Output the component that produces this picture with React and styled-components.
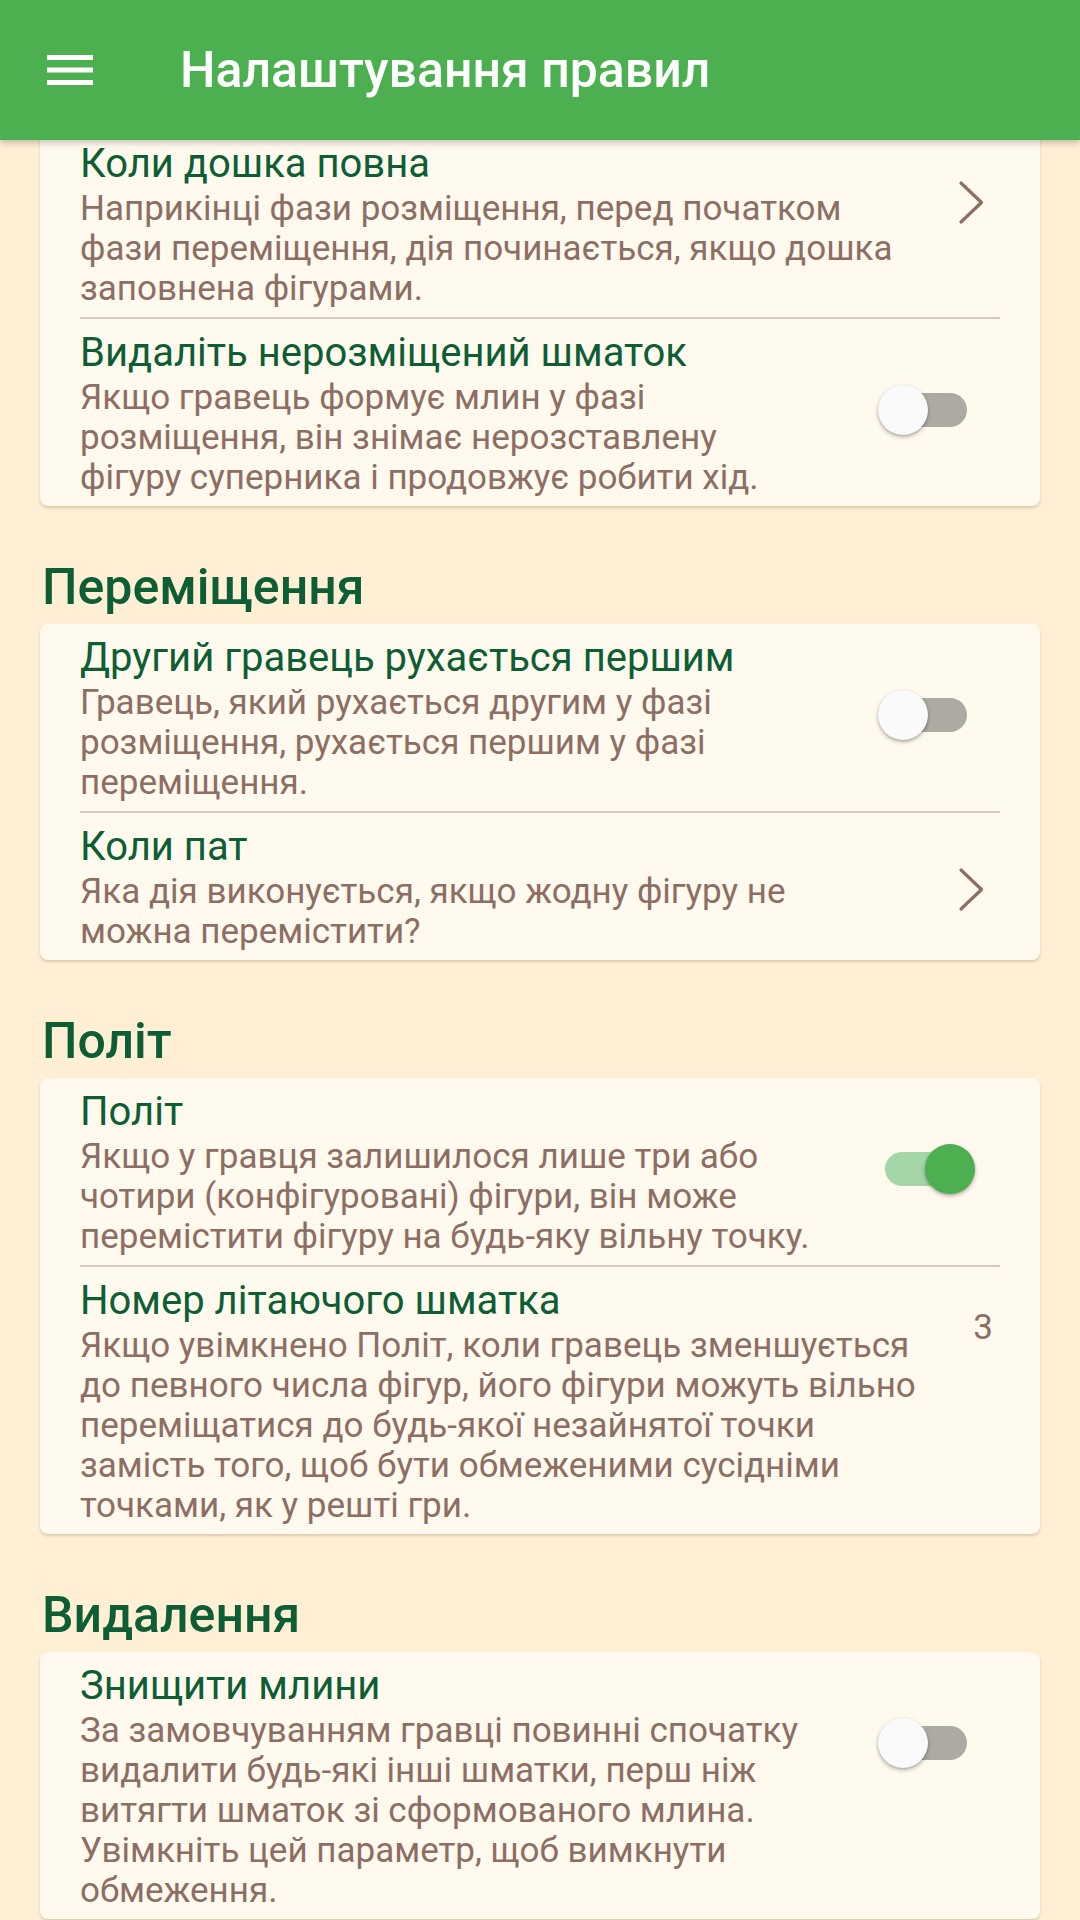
import React from "react";
import styled, { createGlobalStyle } from "styled-components";

const Global = createGlobalStyle`
  html, body { margin: 0; padding: 0; background: #FFEFD5; }
  body { font-family: Roboto, "Noto Sans", "Liberation Sans", sans-serif; -webkit-font-smoothing: antialiased; }
`;

const Page = styled.div`
  width: 1080px;
  min-height: 1920px;
  background: #FFEFD5;
  overflow: hidden;
`;

const AppBar = styled.header`
  position: sticky;
  top: 0;
  z-index: 5;
  height: 140px;
  background: #4CAF50;
  display: flex;
  align-items: center;
  box-shadow: 0 3px 6px rgba(0, 0, 0, 0.22);
`;

const MenuButton = styled.div`
  width: 60px;
  height: 60px;
  margin-left: 40px;
  display: flex;
  align-items: center;
  justify-content: center;
`;

const Title = styled.h1`
  margin: 0 0 0 80px;
  color: #ffffff;
  font-size: 50px;
  font-weight: 500;
  letter-spacing: 0;
`;

const Content = styled.main`
  margin-top: -10px;
  padding: 0 40px;
  display: flex;
  flex-direction: column;
`;

const SectionHeader = styled.h2`
  margin: 51px 0 7px 0;
  height: 60px;
  line-height: 60px;
  font-size: 50px;
  font-weight: 500;
  color: #0D5E34;
  padding-left: 2px;
`;

const Card = styled.section`
  background: #FFF9EE;
  border-radius: 8px;
  box-shadow: 0 2px 3px rgba(120, 90, 50, 0.25);
  display: flex;
  flex-direction: column;
`;

const Row = styled.div`
  display: flex;
  align-items: flex-start;
  padding: 9px 0 8px 40px;
`;

const TextCol = styled.div`
  flex: 1;
  min-width: 0;
`;

const ItemTitle = styled.div`
  font-size: 40px;
  line-height: 50px;
  color: #0D5E34;
`;

const Summary = styled.div`
  font-size: 35px;
  line-height: 40px;
  color: #8D6E63;
`;

const Line = styled.span`
  display: block;
`;

const Divider = styled.div`
  height: 2px;
  margin: 0 40px;
  background: #DCC8C2;
`;

const Widget = styled.div`
  flex: none;
  width: ${(p) => p.$w}px;
  padding-right: ${(p) => p.$pr}px;
  margin-top: ${(p) => p.$mt}px;
  box-sizing: border-box;
  display: flex;
  justify-content: flex-end;
`;

const SwitchBox = styled.span`
  position: relative;
  display: inline-block;
  width: 97px;
  height: 50px;
`;

const Track = styled.span`
  position: absolute;
  left: 7px;
  top: 8px;
  width: 82px;
  height: 34px;
  border-radius: 17px;
  background: ${(p) => (p.$on ? "#A5D6A7" : "#ADAAA3")};
`;

const Thumb = styled.span`
  position: absolute;
  top: 0;
  left: ${(p) => (p.$on ? 47 : 0)}px;
  width: 50px;
  height: 50px;
  border-radius: 50%;
  background: ${(p) => (p.$on ? "#4CAF50" : "#FAFAFA")};
  box-shadow: 0 2px 4px rgba(0, 0, 0, 0.28), 0 1px 2px rgba(0, 0, 0, 0.12);
`;

const Value = styled.div`
  font-size: 35px;
  line-height: 40px;
  color: #8D6E63;
`;

const MenuIcon = () => (
  <svg width="60" height="60" viewBox="0 0 60 60">
    <rect x="7" y="15" width="46" height="5" fill="#fff" />
    <rect x="7" y="27.5" width="46" height="5" fill="#fff" />
    <rect x="7" y="40" width="46" height="5" fill="#fff" />
  </svg>
);

const Chevron = () => (
  <svg width="27" height="45" viewBox="0 0 27 45">
    <polyline
      points="3,3 23.5,22.5 3,42"
      fill="none"
      stroke="#8D6E63"
      strokeWidth="3.2"
      strokeLinecap="round"
      strokeLinejoin="round"
    />
  </svg>
);

const Switch = ({ on }) => (
  <SwitchBox>
    <Track $on={on} />
    <Thumb $on={on} />
  </SwitchBox>
);

const sections = [
  {
    header: null,
    items: [
      {
        title: "Коли дошка повна",
        lines: [
          "Наприкінці фази розміщення, перед початком",
          "фази переміщення, дія починається, якщо дошка",
          "заповнена фігурами.",
        ],
        kind: "chevron",
        mt: 41,
      },
      {
        title: "Видаліть нерозміщений шматок",
        lines: [
          "Якщо гравець формує млин у фазі",
          "розміщення, він знімає нерозставлену",
          "фігуру суперника і продовжує робити хід.",
        ],
        kind: "switch",
        on: false,
      },
    ],
  },
  {
    header: "Переміщення",
    items: [
      {
        title: "Другий гравець рухається першим",
        lines: [
          "Гравець, який рухається другим у фазі",
          "розміщення, рухається першим у фазі",
          "переміщення.",
        ],
        kind: "switch",
        on: false,
      },
      {
        title: "Коли пат",
        lines: ["Яка дія виконується, якщо жодну фігуру не", "можна перемістити?"],
        kind: "chevron",
        mt: 45,
      },
    ],
  },
  {
    header: "Політ",
    items: [
      {
        title: "Політ",
        lines: [
          "Якщо у гравця залишилося лише три або",
          "чотири (конфігуровані) фігури, він може",
          "перемістити фігуру на будь-яку вільну точку.",
        ],
        kind: "switch",
        on: true,
      },
      {
        title: "Номер літаючого шматка",
        lines: [
          "Якщо увімкнено Політ, коли гравець зменшується",
          "до певного числа фігур, його фігури можуть вільно",
          "переміщатися до будь-якої незайнятої точки",
          "замість того, щоб бути обмеженими сусідніми",
          "точками, як у решті гри.",
        ],
        kind: "value",
        value: "3",
      },
    ],
  },
  {
    header: "Видалення",
    items: [
      {
        title: "Знищити млини",
        lines: [
          "За замовчуванням гравці повинні спочатку",
          "видалити будь-які інші шматки, перш ніж",
          "витягти шматок зі сформованого млина.",
          "Увімкніть цей параметр, щоб вимкнути",
          "обмеження.",
        ],
        kind: "switch",
        on: false,
      },
    ],
  },
];

const widgetFor = (item) => {
  if (item.kind === "chevron")
    return (
      <Widget $w={130} $pr={55} $mt={item.mt}>
        <Chevron />
      </Widget>
    );
  if (item.kind === "switch")
    return (
      <Widget $w={200} $pr={65} $mt={57}>
        <Switch on={item.on} />
      </Widget>
    );
  return (
    <Widget $w={80} $pr={47} $mt={32}>
      <Value>{item.value}</Value>
    </Widget>
  );
};

export default function App() {
  return (
    <Page>
      <Global />
      <AppBar>
        <MenuButton>
          <MenuIcon />
        </MenuButton>
        <Title>Налаштування правил</Title>
      </AppBar>
      <Content>
        {sections.map((s, si) => (
          <React.Fragment key={si}>
            {s.header && <SectionHeader>{s.header}</SectionHeader>}
            <Card>
              {s.items.map((it, ii) => (
                <React.Fragment key={ii}>
                  {ii > 0 && <Divider />}
                  <Row>
                    <TextCol>
                      <ItemTitle>{it.title}</ItemTitle>
                      <Summary>
                        {it.lines.map((l, li) => (
                          <Line key={li}>{l}</Line>
                        ))}
                      </Summary>
                    </TextCol>
                    {widgetFor(it)}
                  </Row>
                </React.Fragment>
              ))}
            </Card>
          </React.Fragment>
        ))}
      </Content>
    </Page>
  );
}
